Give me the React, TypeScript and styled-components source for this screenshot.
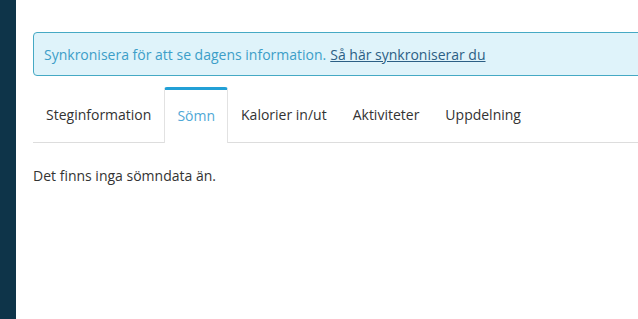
import styled, { createGlobalStyle } from 'styled-components'

const Global = createGlobalStyle`
	html, body {
		margin: 0;
		padding: 0;
		background: #fff;
		overflow: hidden;
	}
	body {
		font-family: 'Open Sans', 'Noto Sans', sans-serif;
		font-size: 14px;
		color: #333;
	}
`

const Layout = styled.div`
	display: flex;
	height: 319px;
	width: 638px;
	overflow: hidden;
`

const Sidebar = styled.aside`
	flex: 0 0 16px;
	background: #0e3449;
`

const Main = styled.main`
	flex: 1;
	padding: 32px 0 0 17px;
	min-width: 0;
`

const Alert = styled.div`
	box-sizing: border-box;
	width: 640px;
	height: 44px;
	display: flex;
	align-items: center;
	padding: 0 10px;
	background: #dff3fa;
	border: 1px solid #45a9c4;
	border-radius: 4px;
	color: #3c9ec8;
	white-space: nowrap;
`

const AlertLink = styled.a`
	color: #2c5f85;
	text-decoration: underline;
	margin-left: 4px;
`

const Tabs = styled.nav`
	display: flex;
	margin-top: 11px;
	width: 640px;
	border-bottom: 1px solid #ddd;
`

const Tab = styled.div<{ $active?: boolean }>`
	box-sizing: border-box;
	display: flex;
	align-items: center;
	padding: 0 12px 3px;
	border: 1px solid ${(p) => (p.$active ? '#e2e2e2' : 'transparent')};
	border-top: 3px solid ${(p) => (p.$active ? '#22a0d6' : 'transparent')};
	border-bottom: none;
	border-radius: 3px 3px 0 0;
	margin-bottom: ${(p) => (p.$active ? '-1px' : '0')};
	height: ${(p) => (p.$active ? '56px' : '55px')};
	background: ${(p) => (p.$active ? '#fff' : 'transparent')};
	color: ${(p) => (p.$active ? '#4fa8d6' : '#333')};
	white-space: nowrap;
`

const Empty = styled.p`
	margin: 23px 0 0;
	color: #333;
`

const tabs = ['Steginformation', 'Sömn', 'Kalorier in/ut', 'Aktiviteter', 'Uppdelning']

export default function App() {
	return (
		<Layout>
			<Global />
			<Sidebar />
			<Main>
				<Alert>
					Synkronisera för att se dagens information.
					<AlertLink href='#'>Så här synkroniserar du</AlertLink>
				</Alert>
				<Tabs>
					{tabs.map((t) => (
						<Tab key={t} $active={t === 'Sömn'}>
							{t}
						</Tab>
					))}
				</Tabs>
				<Empty>Det finns inga sömndata än.</Empty>
			</Main>
		</Layout>
	)
}
